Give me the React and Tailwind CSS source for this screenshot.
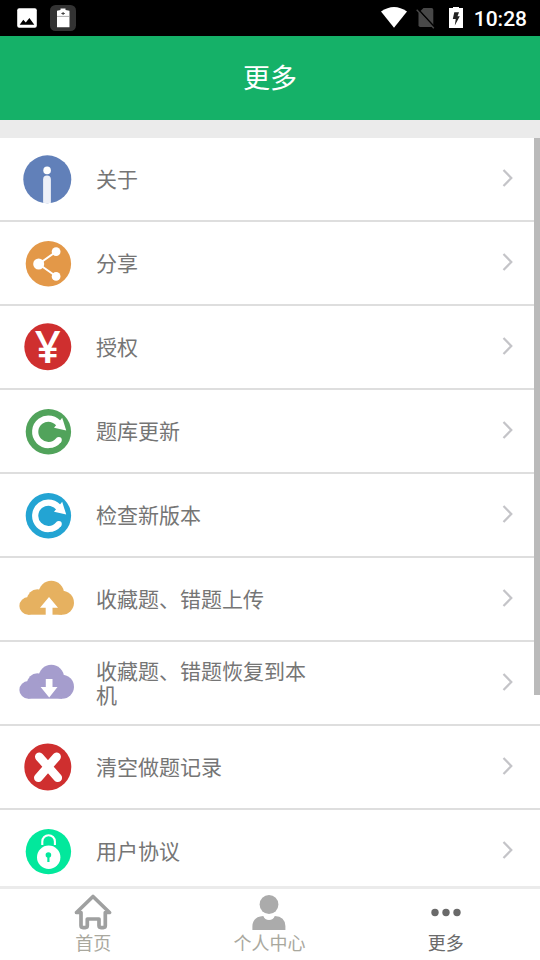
import React from "react";

const AboutIcon = () => (
  <svg viewBox="0 0 64 64" className="w-16 h-16">
    <defs>
      <clipPath id="about-clip">
        <circle cx="31.3" cy="32.3" r="24" />
      </clipPath>
    </defs>
    <circle cx="31.3" cy="32.3" r="24" fill="#6180b9" />
    <circle cx="31.1" cy="23.4" r="3.8" fill="#fff" />
    <rect x="27.1" y="28.6" width="7.8" height="34" rx="3.9" fill="#edf0f8" clipPath="url(#about-clip)" />
  </svg>
);

const ShareIcon = () => (
  <svg viewBox="0 0 64 64" className="w-16 h-16">
    <circle cx="32.4" cy="32.7" r="22.7" fill="#e39848" />
    <path d="M40 20.7L22.7 33L40 45.3" stroke="#fff" strokeWidth="2" fill="none" />
    <circle cx="22.7" cy="33" r="5.5" fill="#fff" />
    <circle cx="40.1" cy="20.7" r="4.4" fill="#fff" />
    <circle cx="40.1" cy="45.4" r="4.4" fill="#fff" />
  </svg>
);

const YenIcon = () => (
  <svg viewBox="0 0 64 64" className="w-16 h-16">
    <circle cx="31.8" cy="31.8" r="23.5" fill="#cf2f2f" />
    <text x="31.7" y="48.3" textAnchor="middle" fill="#fff" className="font-['Open_Sans',sans-serif] font-semibold text-[45.5px]">
      ¥
    </text>
  </svg>
);

const RefreshIcon = ({ color }) => (
  <svg viewBox="0 0 64 64" className="w-16 h-16">
    <circle cx="32.4" cy="32.7" r="22.7" fill={color} />
    <path
      d="M42.6 41.2A13.2 13.2 0 1 1 43.8 26.2"
      stroke="#fff"
      strokeWidth="6.2"
      fill="none"
    />
    <circle cx="42.8" cy="41" r="3" fill="#fff" />
    <path d="M46.2 18.8L50.2 31.5L38 28.8Z" fill="#fff" />
  </svg>
);

const CloudIcon = ({ color, arrow }) => (
  <svg viewBox="0 0 64 64" className="w-16 h-16">
    <g fill={color}>
      <circle cx="12.2" cy="38.9" r="8.8" />
      <circle cx="21.4" cy="32.6" r="10.3" />
      <circle cx="35.3" cy="26.4" r="12.7" />
      <circle cx="46" cy="35.7" r="12" />
      <rect x="12.2" y="33" width="33.8" height="14.7" />
    </g>
    <path d={arrow} fill="#fff" />
  </svg>
);

const ClearIcon = () => (
  <svg viewBox="0 0 64 64" className="w-16 h-16">
    <circle cx="31.8" cy="32" r="23.5" fill="#cf2f2f" />
    <path
      d="M23.3 21.8L41.8 42.8M40.6 21.8L22.3 42.8"
      stroke="#fff"
      strokeWidth="8.6"
      strokeLinecap="round"
    />
  </svg>
);

const LockIcon = () => (
  <svg viewBox="0 0 64 64" className="w-16 h-16">
    <circle cx="32.4" cy="32.6" r="22.7" fill="#02e89c" />
    <path d="M26.3 26V22.5A6.3 6.3 0 0 1 38.9 22.5V26" stroke="#fff" strokeWidth="2.1" fill="none" />
    <circle cx="32.7" cy="38.2" r="11.7" fill="#fff" />
    <circle cx="32.4" cy="36" r="2.8" fill="#02e89c" />
    <path d="M32.4 36V43" stroke="#02e89c" strokeWidth="2.2" />
  </svg>
);

const menuItems = [
  { label: "关于", icon: <AboutIcon /> },
  { label: "分享", icon: <ShareIcon /> },
  { label: "授权", icon: <YenIcon /> },
  { label: "题库更新", icon: <RefreshIcon color="#51a35b" /> },
  { label: "检查新版本", icon: <RefreshIcon color="#23a4d3" /> },
  {
    label: "收藏题、错题上传",
    icon: <CloudIcon color="#e6b160" arrow="M33 30L42 40.7H36.5V48H29.7V40.7H24Z" />,
  },
  {
    label: "收藏题、错题恢复到本机",
    icon: <CloudIcon color="#a59dcd" arrow="M29.8 28H36.5V36H41.5L33.2 46.5L24.6 36H29.8Z" />,
  },
  { label: "清空做题记录", icon: <ClearIcon /> },
  { label: "用户协议", icon: <LockIcon /> },
];

const StatusBar = () => (
  <div className="h-9 shrink-0 bg-black flex items-center justify-between pl-4 pr-3">
    <div className="flex items-center gap-3">
      <svg viewBox="0 0 22 22" className="w-[22px] h-[22px]">
        <rect x="1.2" y="1.2" width="19.6" height="19.6" rx="2" fill="#fff" />
        <path d="M3.7 17.8L7.3 12.7L9.8 15.6L13.4 11L18.3 17.8Z" fill="#000" />
      </svg>
      <svg viewBox="0 0 26 26" className="w-[26px] h-[26px]">
        <rect width="26" height="26" rx="5.5" fill="#333" />
        <path d="M7 5.8L10.5 5V3.5H15.5V5L19.5 5.8V22.3H7Z" fill="#fff" />
        <path d="M7 11.4H19.5" stroke="#999" strokeWidth="0.8" />
        <path d="M11.4 8.5H14.8M13.1 7V10" stroke="#444" strokeWidth="1" />
      </svg>
    </div>
    <div className="flex items-center">
      <svg viewBox="0 0 26 22" className="w-[26px] h-[22px] mr-[9px]">
        <path d="M0 4.6Q13 -4.4 26 4.6L13 20.8Z" fill="#fff" />
      </svg>
      <svg viewBox="0 0 20 22" className="w-5 h-[22px] mr-[13px]">
        <path d="M7.5 1H15.5Q17.3 1 17.3 2.8V18.2Q17.3 20 15.5 20H4.3Q2.5 20 2.5 18.2V6Z" fill="#484848" />
        <path d="M1.7 1.7L19 20.6" stroke="#000" strokeWidth="1.6" />
        <path d="M0.7 2.8L17.8 21.2" stroke="#484848" strokeWidth="1.4" />
      </svg>
      <svg viewBox="0 0 14 22" className="w-3.5 h-[22px] mr-[11px]">
        <path d="M0 1H4V-1H10V1H14V21H0Z" fill="#fff" />
        <path d="M5.3 5.2H10L8.5 9.3H10.8L5.8 18.5L6.7 12H3.8Z" fill="#222" />
      </svg>
      <span className="pt-0.5 mr-px text-white text-[21px] leading-8 font-medium font-['Roboto',sans-serif]">
        10:28
      </span>
    </div>
  </div>
);

const MenuRow = ({ icon, label }) => (
  <li className="h-[84px] shrink-0 flex items-center border-b-2 border-[#dedede] pl-4 pr-[26px]">
    {icon}
    <span className="w-[220px] ml-4 pb-0.5 text-[21px] leading-6 text-[#757575]">{label}</span>
    <svg viewBox="0 0 12 20" className="w-3 h-5 ml-auto -mt-0.5">
      <path d="M1.5 2L9.3 10L1.5 18" stroke="#c4c4c8" strokeWidth="2.2" fill="none" />
    </svg>
  </li>
);

const TabBar = () => (
  <nav className="h-[74px] shrink-0 grid grid-cols-3 border-t-[3px] border-[#ebebeb] pl-[5px] pr-1.5 pt-1 text-[18px] leading-[22px] text-center text-[#a9a89e]">
    <div className="flex flex-col items-center">
      <svg viewBox="0 0 38 38" className="w-[38px] h-[38px]">
        <path
          d="M2.5 19.5L19 3.5L35.5 19.5H31.3V32.6Q31.3 34.6 29.3 34.6H27Q25 34.6 25 32.6V26H13.3V32.6Q13.3 34.6 11.3 34.6H9Q7 34.6 7 32.6V19.5Z"
          stroke="#9fa0a0"
          strokeWidth="3.7"
          strokeLinejoin="round"
          fill="none"
        />
      </svg>
      <span>首页</span>
    </div>
    <div className="flex flex-col items-center">
      <svg viewBox="0 0 38 38" className="w-[38px] h-[38px]">
        <circle cx="19" cy="11.5" r="9.4" fill="#ababab" />
        <path d="M2.4 37V33Q3 23.5 13.3 23Q14.8 27 19 27Q23.3 27 24.8 23Q35 23.5 35.4 33V37Z" fill="#ababab" />
      </svg>
      <span>个人中心</span>
    </div>
    <div className="flex flex-col items-center text-[#6a6a6a]">
      <svg viewBox="0 0 38 38" className="w-[38px] h-[38px]">
        <circle cx="8" cy="19.5" r="3.7" fill="#6a6a6a" />
        <circle cx="19" cy="19.5" r="3.7" fill="#6a6a6a" />
        <circle cx="30" cy="19.5" r="3.7" fill="#6a6a6a" />
      </svg>
      <span>更多</span>
    </div>
  </nav>
);

const App = () => {
  return (
    <div className="w-[540px] h-[960px] flex flex-col overflow-hidden bg-white font-['Noto_Sans_CJK_SC',sans-serif]">
      <StatusBar />
      <header className="h-[84px] shrink-0 bg-[#15b168] flex items-center justify-center pb-0.5">
        <h1 className="text-[27px] text-white">更多</h1>
      </header>
      <div className="h-[18px] shrink-0 bg-[#ebebeb]" />
      <main className="relative flex-1 min-h-0 overflow-hidden">
        <ul className="flex flex-col">
          {menuItems.map((item) => (
            <MenuRow key={item.label} icon={item.icon} label={item.label} />
          ))}
        </ul>
        {/* scroll thumb */}
        <div className="absolute top-0 right-0 w-1.5 h-[557px] bg-[#bababa]" />
      </main>
      <TabBar />
    </div>
  );
};

export default App;
